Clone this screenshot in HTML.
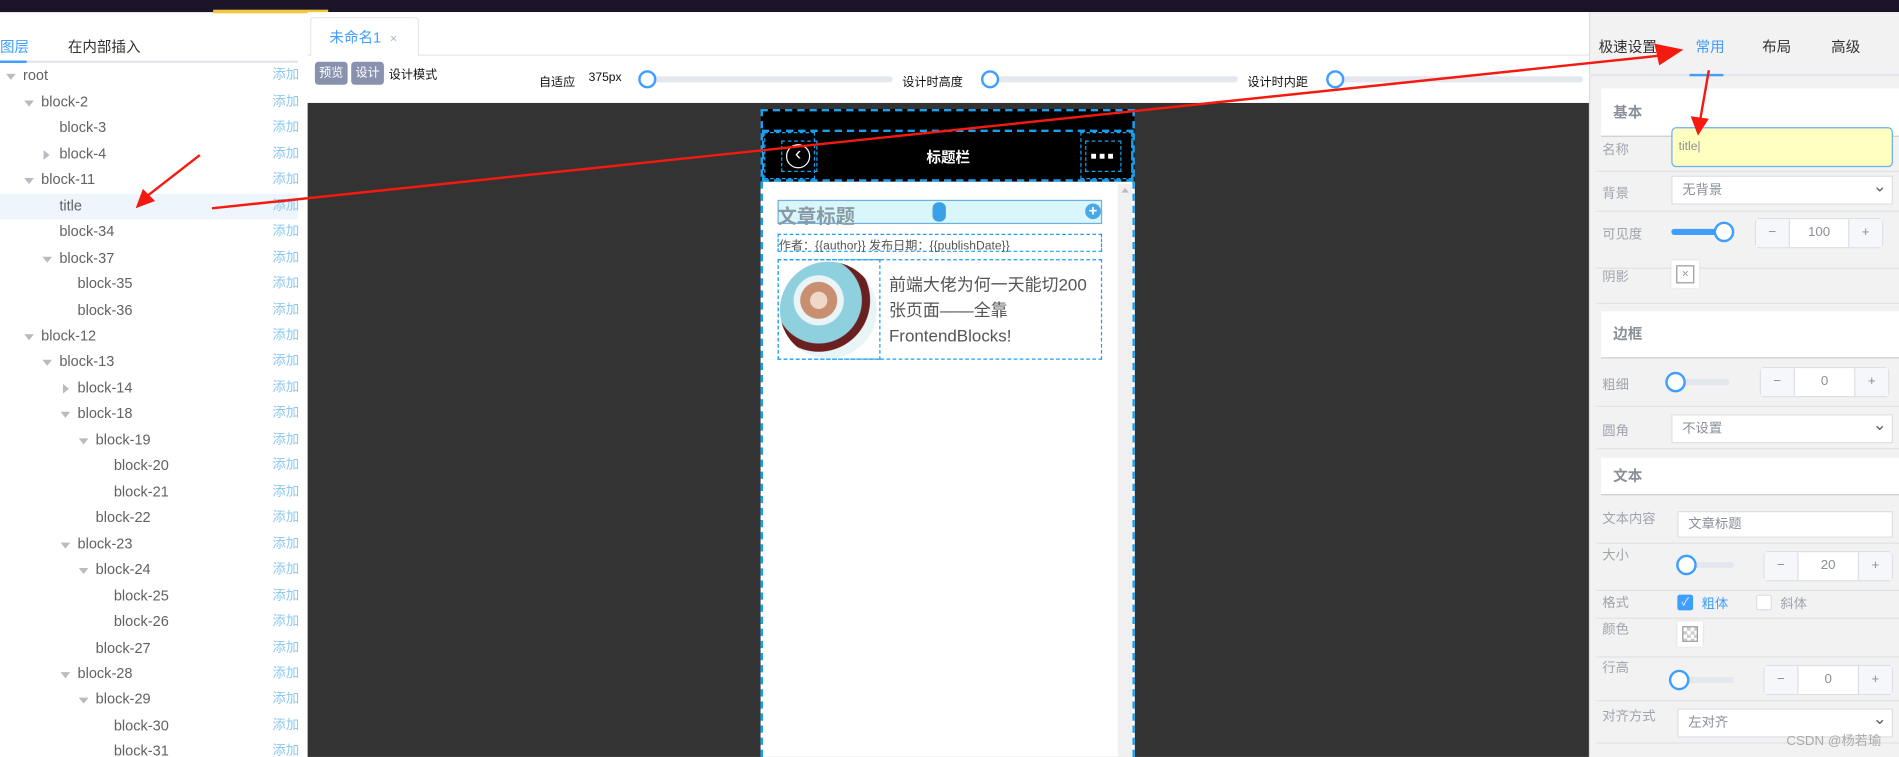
<!DOCTYPE html>
<html><head><meta charset="utf-8"><style>
*{margin:0;padding:0;box-sizing:border-box}
html,body{width:1899px;height:757px;overflow:hidden;background:#fff}
#w{position:absolute;left:0;top:0;width:1568px;height:625px;overflow:hidden;transform:scale(1.2111);transform-origin:0 0;font-family:"Liberation Sans","Noto Sans CJK SC",sans-serif;color:#606266;font-size:12px}
.a{position:absolute;white-space:nowrap}
.r{position:absolute;left:0;width:246px;height:21px;line-height:21px;white-space:nowrap}
.r b{font-weight:normal;position:absolute;top:0}
.r i{font-style:normal;position:absolute;left:225px;top:0;width:30px;white-space:nowrap;color:#8cc8f0;font-size:11px}
.d{position:absolute;top:9px;width:0;height:0;border-left:4px solid transparent;border-right:4px solid transparent;border-top:5px solid #b8bbc0}
.g{position:absolute;top:7px;width:0;height:0;border-top:4px solid transparent;border-bottom:4px solid transparent;border-left:5px solid #b8bbc0}
.sl{position:absolute;height:5px;background:#e4e7ed;border-radius:3px}
.th{position:absolute;width:15px;height:15px;border:2px solid #409eff;border-radius:50%;background:#fff}
.lab{position:absolute;left:1323px;color:#a0a4ad;font-size:11px;white-space:nowrap}
.sec{position:absolute;left:1322px;width:246px;background:#fff;border-bottom:1px solid #ccc;font-weight:bold;color:#8a8f99;font-size:12px;padding-left:10px}
.hr{position:absolute;left:1318px;width:250px;height:1px;background:#e2e2e2}
.inp{position:absolute;background:#fff;border:1px solid #dcdfe6;color:#8a8f99;font-size:11px;padding-left:8px;white-space:nowrap}
.sel:after{content:"⌄";position:absolute;right:4px;top:-4px;font-size:14px;color:#666}
.num{position:absolute;background:#fff;border:1px solid #dcdfe6;border-radius:4px;font-size:11px;color:#8a8f99}
.num span{position:absolute;top:0;height:100%;text-align:center}
.num .m{left:0;width:28px;background:#f5f7fa;border-right:1px solid #dcdfe6}
.num .p{right:0;width:28px;background:#f5f7fa;border-left:1px solid #dcdfe6}
.num .v{left:28px;right:28px}
.dash{position:absolute;border:1px dashed #1aa0f0}
</style></head><body><div id="w">
<div class="a" style="left:0;top:0;width:1568px;height:10px;background:#1b1429"></div>
<div class="a" style="left:176px;top:8px;width:95px;height:3px;background:#f3c640"></div>
<div class="a" style="left:0;top:30px;color:#409eff">图层</div>
<div class="a" style="left:56px;top:30px;color:#303133">在内部插入</div>
<div class="a" style="left:0;top:50px;width:246px;height:2px;background:#e4e7ed"></div>
<div class="a" style="left:0;top:50px;width:22px;height:2px;background:#409eff"></div>
<div class="r" style="top:52px"><span class="d" style="left:5px"></span><b style="left:19px">root</b><i>添加</i></div>
<div class="r" style="top:74px"><span class="d" style="left:20px"></span><b style="left:34px">block-2</b><i>添加</i></div>
<div class="r" style="top:95px"><b style="left:49px">block-3</b><i>添加</i></div>
<div class="r" style="top:117px"><span class="g" style="left:36px"></span><b style="left:49px">block-4</b><i>添加</i></div>
<div class="r" style="top:138px"><span class="d" style="left:20px"></span><b style="left:34px">block-11</b><i>添加</i></div>
<div class="r" style="top:160px;background:#eef5fd"><b style="left:49px">title</b><i>添加</i></div>
<div class="r" style="top:181px"><b style="left:49px">block-34</b><i>添加</i></div>
<div class="r" style="top:203px"><span class="d" style="left:35px"></span><b style="left:49px">block-37</b><i>添加</i></div>
<div class="r" style="top:224px"><b style="left:64px">block-35</b><i>添加</i></div>
<div class="r" style="top:246px"><b style="left:64px">block-36</b><i>添加</i></div>
<div class="r" style="top:267px"><span class="d" style="left:20px"></span><b style="left:34px">block-12</b><i>添加</i></div>
<div class="r" style="top:288px"><span class="d" style="left:35px"></span><b style="left:49px">block-13</b><i>添加</i></div>
<div class="r" style="top:310px"><span class="g" style="left:52px"></span><b style="left:64px">block-14</b><i>添加</i></div>
<div class="r" style="top:331px"><span class="d" style="left:50px"></span><b style="left:64px">block-18</b><i>添加</i></div>
<div class="r" style="top:353px"><span class="d" style="left:65px"></span><b style="left:79px">block-19</b><i>添加</i></div>
<div class="r" style="top:374px"><b style="left:94px">block-20</b><i>添加</i></div>
<div class="r" style="top:396px"><b style="left:94px">block-21</b><i>添加</i></div>
<div class="r" style="top:417px"><b style="left:79px">block-22</b><i>添加</i></div>
<div class="r" style="top:439px"><span class="d" style="left:50px"></span><b style="left:64px">block-23</b><i>添加</i></div>
<div class="r" style="top:460px"><span class="d" style="left:65px"></span><b style="left:79px">block-24</b><i>添加</i></div>
<div class="r" style="top:482px"><b style="left:94px">block-25</b><i>添加</i></div>
<div class="r" style="top:503px"><b style="left:94px">block-26</b><i>添加</i></div>
<div class="r" style="top:525px"><b style="left:79px">block-27</b><i>添加</i></div>
<div class="r" style="top:546px"><span class="d" style="left:50px"></span><b style="left:64px">block-28</b><i>添加</i></div>
<div class="r" style="top:567px"><span class="d" style="left:65px"></span><b style="left:79px">block-29</b><i>添加</i></div>
<div class="r" style="top:589px"><b style="left:94px">block-30</b><i>添加</i></div>
<div class="r" style="top:610px"><b style="left:94px">block-31</b><i>添加</i></div>

<div class="a" style="left:254px;top:10px;width:1058px;height:36px;background:#fff;border-bottom:1px solid #e4e7ed"></div>
<div class="a" style="left:256px;top:14px;width:90px;height:33px;border:1px solid #e4e7ed;border-bottom:1px solid #fff;border-radius:3px 3px 0 0;background:#fff"></div>
<div class="a" style="left:272px;top:22px;color:#409eff">未命名1 <span style="color:#a0b8d0;font-size:10px;margin-left:4px">×</span></div>
<div class="a" style="left:260px;top:51px;width:27px;height:19px;background:#8891ad;border-radius:3px;color:#fff;font-size:10px;line-height:19px;text-align:center">预览</div>
<div class="a" style="left:290px;top:51px;width:27px;height:19px;background:#8891ad;border-radius:3px;color:#fff;font-size:10px;line-height:19px;text-align:center">设计</div>
<div class="a" style="left:321px;top:53px;color:#111;font-size:10px">设计模式</div>
<div class="a" style="left:445px;top:59px;color:#111;font-size:10px">自适应</div>
<div class="a" style="left:486px;top:59px;color:#111;font-size:10px">375px</div>
<div class="sl" style="left:530px;top:63px;width:207px"></div>
<div class="th" style="left:527px;top:58px"></div>
<div class="a" style="left:745px;top:59px;color:#111;font-size:10px">设计时高度</div>
<div class="sl" style="left:815px;top:63px;width:207px"></div>
<div class="th" style="left:810px;top:58px"></div>
<div class="a" style="left:1030px;top:59px;color:#111;font-size:10px">设计时内距</div>
<div class="sl" style="left:1100px;top:63px;width:207px"></div>
<div class="th" style="left:1095px;top:58px"></div>
<div class="a" style="left:254px;top:85px;width:1058px;height:540px;background:#333"></div>

<div class="a" style="left:628px;top:90px;width:309px;height:535px;background:#fff"></div>
<div class="a" style="left:628px;top:90px;width:309px;height:60px;background:#000"></div>
<div class="dash" style="left:628px;top:90px;width:309px;height:545px;border-width:2px"></div>
<div class="dash" style="left:629px;top:107px;width:307px;height:43px;border-width:2px"></div>
<div class="dash" style="left:631px;top:109px;width:42px;height:39px"></div>
<div class="dash" style="left:645px;top:116px;width:30px;height:26px"></div>
<div class="a" style="left:649px;top:119px;width:20px;height:20px;border:1.5px solid #fff;border-radius:50%;color:#fff;font-size:16px;line-height:15px;text-align:center">&lsaquo;</div>
<div class="a" style="left:765px;top:121px;color:#fff;font-weight:bold">标题栏</div>
<div class="dash" style="left:892px;top:109px;width:43px;height:39px"></div>
<div class="dash" style="left:896px;top:116px;width:30px;height:26px"></div>
<div class="a" style="left:901px;top:127px;width:4px;height:4px;background:#fff"></div>
<div class="a" style="left:908px;top:127px;width:4px;height:4px;background:#fff"></div>
<div class="a" style="left:915px;top:127px;width:4px;height:4px;background:#fff"></div>
<div class="a" style="left:923px;top:152px;width:12px;height:473px;background:#f0f0f0"></div>
<div class="a" style="left:926px;top:155px;width:0;height:0;border-left:3px solid transparent;border-right:3px solid transparent;border-bottom:4px solid #bbb"></div>
<div class="a" style="left:642px;top:165px;width:268px;height:20px;background:#d9f7fb;border:1px solid #6fb0e0"></div>
<div class="a" style="left:642px;top:165px;color:#8a9aa5;font-size:16px;font-weight:bold">文章标题</div>
<div class="a" style="left:770px;top:167px;width:11px;height:16px;background:#3aa0e8;border-radius:5px"></div>
<div class="a" style="left:896px;top:168px;width:13px;height:13px;border-radius:50%;background:#4aa8e8;color:#fff;font-size:12px;line-height:12px;text-align:center;font-weight:bold">+</div>
<div class="dash" style="left:642px;top:193px;width:268px;height:15px"></div>
<div class="a" style="left:643px;top:194px;color:#555;font-size:10px">作者：{{author}} 发布日期：{{publishDate}}</div>
<div class="dash" style="left:642px;top:214px;width:268px;height:83px"></div>
<div class="dash" style="left:642px;top:214px;width:85px;height:83px"></div>
<div class="a" style="left:644px;top:216px;width:80px;height:80px;border-radius:50%;background:radial-gradient(circle at 40% 40%,#f0d8c8 0 10%,#c89070 11% 22%,#e8f4f6 23% 30%,#8fd0de 31% 52%,#6a2020 53% 62%,#e8f4f6 63%)"></div>
<div class="a" style="left:734px;top:225px;color:#555;font-size:14px;line-height:21px;white-space:normal;width:170px">前端大佬为何一天能切200张页面——全靠FrontendBlocks!</div>

<div class="a" style="left:1312px;top:10px;width:256px;height:615px;background:#f2f2f2;border-left:1px solid #ddd"></div>
<div class="a" style="left:1320px;top:30px;color:#303133">极速设置</div>
<div class="a" style="left:1400px;top:30px;color:#409eff">常用</div>
<div class="a" style="left:1455px;top:30px;color:#303133">布局</div>
<div class="a" style="left:1512px;top:30px;color:#303133">高级</div>
<div class="a" style="left:1312px;top:61px;width:256px;height:2px;background:#e4e7ed"></div>
<div class="a" style="left:1395px;top:61px;width:28px;height:2px;background:#409eff"></div>
<div class="sec" style="top:73px;height:40px;line-height:40px">基本</div>
<div class="lab" style="top:115px">名称</div>
<div class="a" style="left:1380px;top:105px;width:183px;height:33px;background:#ffffc0;border:1px solid #6aaef0;border-radius:4px;font-size:10px;color:#8a8f99;line-height:31px;padding-left:5px">title|</div>
<div class="hr" style="top:141px"></div>
<div class="lab" style="top:151px">背景</div>
<div class="inp sel" style="left:1380px;top:145px;width:183px;height:24px;line-height:22px">无背景</div>
<div class="hr" style="top:174px"></div>
<div class="lab" style="top:185px">可见度</div>
<div class="a" style="left:1380px;top:189px;width:45px;height:5px;background:#409eff;border-radius:3px"></div>
<div class="th" style="left:1415px;top:183px;width:17px;height:17px"></div>
<div class="num" style="left:1449px;top:180px;width:106px;height:25px;line-height:23px"><span class="m">−</span><span class="v">100</span><span class="p">+</span></div>
<div class="hr" style="top:221px"></div>
<div class="lab" style="top:220px">阴影</div>
<div class="a" style="left:1380px;top:215px;width:23px;height:23px;background:#fff;box-shadow:0 0 2px #ccc"></div>
<div class="a" style="left:1384px;top:219px;width:15px;height:15px;border:1px solid #999;color:#999;font-size:10px;line-height:13px;text-align:center">×</div>
<div class="hr" style="top:250px"></div>
<div class="sec" style="top:257px;height:39px;line-height:39px">边框</div>
<div class="lab" style="top:309px">粗细</div>
<div class="sl" style="left:1380px;top:313px;width:48px"></div>
<div class="th" style="left:1375px;top:307px;width:17px;height:17px"></div>
<div class="num" style="left:1453px;top:303px;width:107px;height:25px;line-height:23px"><span class="m">−</span><span class="v">0</span><span class="p">+</span></div>
<div class="hr" style="top:335px"></div>
<div class="lab" style="top:347px">圆角</div>
<div class="inp sel" style="left:1380px;top:342px;width:183px;height:24px;line-height:22px">不设置</div>
<div class="hr" style="top:370px"></div>
<div class="sec" style="top:378px;height:31px;line-height:31px">文本</div>
<div class="lab" style="top:420px">文本内容</div>
<div class="inp" style="left:1385px;top:422px;width:178px;height:22px;line-height:20px">文章标题</div>
<div class="hr" style="top:448px"></div>
<div class="lab" style="top:450px">大小</div>
<div class="sl" style="left:1385px;top:464px;width:47px"></div>
<div class="th" style="left:1384px;top:458px;width:17px;height:17px"></div>
<div class="num" style="left:1456px;top:455px;width:107px;height:25px;line-height:23px"><span class="m">−</span><span class="v">20</span><span class="p">+</span></div>
<div class="hr" style="top:487px"></div>
<div class="lab" style="top:489px">格式</div>
<div class="a" style="left:1385px;top:491px;width:13px;height:13px;background:#409eff;border-radius:2px;color:#fff;font-size:9px;line-height:13px;text-align:center">✓</div>
<div class="a" style="left:1405px;top:490px;color:#409eff;font-size:11px">粗体</div>
<div class="a" style="left:1450px;top:491px;width:13px;height:13px;background:#fff;border:1px solid #dcdfe6;border-radius:2px"></div>
<div class="a" style="left:1470px;top:490px;color:#a0a4ad;font-size:11px">斜体</div>
<div class="hr" style="top:510px"></div>
<div class="lab" style="top:511px">颜色</div>
<div class="a" style="left:1385px;top:513px;width:21px;height:21px;background:#fff;box-shadow:0 0 2px #ccc"></div>
<div class="a" style="left:1389px;top:517px;width:13px;height:13px;border:1px solid #999;background:conic-gradient(#ccc 0 25%,#fff 0 50%,#ccc 0 75%,#fff 0);background-size:6px 6px"></div>
<div class="hr" style="top:542px"></div>
<div class="lab" style="top:543px">行高</div>
<div class="sl" style="left:1380px;top:559px;width:52px"></div>
<div class="th" style="left:1378px;top:553px;width:17px;height:17px"></div>
<div class="num" style="left:1456px;top:549px;width:107px;height:25px;line-height:23px"><span class="m">−</span><span class="v">0</span><span class="p">+</span></div>
<div class="hr" style="top:578px"></div>
<div class="lab" style="top:583px">对齐方式</div>
<div class="inp sel" style="left:1385px;top:585px;width:178px;height:24px;line-height:22px">左对齐</div>
<div class="hr" style="top:613px"></div>
<div class="a" style="left:1475px;top:603px;color:#aaa;font-size:11px">CSDN @杨若瑜</div>

<svg class="a" style="left:0;top:0" width="1568" height="625" viewBox="0 0 1568 625">
<g fill="#f41a10" stroke="#f41a10">
<line x1="175" y1="172" x2="1370" y2="46" stroke-width="2"/>
<polygon points="1390,41 1366,36 1370,54" stroke="none"/>
<line x1="165" y1="128" x2="120" y2="163" stroke-width="2"/>
<polygon points="112,172 118,156 128,166" stroke="none"/>
<line x1="1411" y1="58" x2="1404" y2="98" stroke-width="2"/>
<polygon points="1402,112 1396,96 1411,98" stroke="none"/>
</g></svg>
</div></body></html>
